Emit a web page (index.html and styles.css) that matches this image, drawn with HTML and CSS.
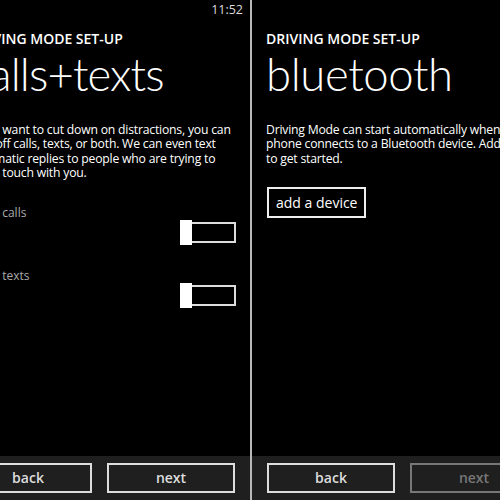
FILE: index.html
```html
<!DOCTYPE html>
<html>
<head>
<meta charset="utf-8">
<link rel="stylesheet" href="styles.css">
</head>
<body>
<div class="screens">
  <div class="panel panel-left">
    <div class="inner inner-left">
      <div class="status"><span class="time">11:52</span></div>
      <div class="content content-left">
        <div class="header">DRIVING MODE SET-UP</div>
        <div class="title title-left">calls+texts</div>
        <p class="body">If you want to cut down on distractions, you can<br>turn off calls, texts, or both. We can even text<br>automatic replies to people who are trying to<br>get in touch with you.</p>
        <div class="setting">
          <div class="label">Ignore calls</div>
          <div class="toggle-row"><span class="thumb"></span><span class="track"></span></div>
        </div>
        <div class="setting">
          <div class="label">Ignore texts</div>
          <div class="toggle-row"><span class="thumb"></span><span class="track"></span></div>
        </div>
      </div>
      <div class="appbar">
        <div class="btn">back</div>
        <div class="btn">next</div>
      </div>
    </div>
  </div>
  <div class="divider"></div>
  <div class="panel panel-right">
    <div class="inner">
      <div class="status"></div>
      <div class="content content-right">
        <div class="header">DRIVING MODE SET-UP</div>
        <div class="title">bluetooth</div>
        <p class="body">Driving Mode can start automatically when your<br>phone connects to a Bluetooth device. Add one<br>to get started.</p>
        <div class="add-btn">add a device</div>
      </div>
      <div class="appbar">
        <div class="btn">back</div>
        <div class="btn btn-disabled">next</div>
      </div>
    </div>
  </div>
</div>
</body>
</html>
```
FILE: styles.css
```css
html, body {
  margin: 0;
  padding: 0;
  background: #000;
}
body {
  width: 500px;
  height: 500px;
  overflow: hidden;
  font-family: "Open Sans", "Noto Sans", sans-serif;
  color: #fff;
}
.screens {
  display: flex;
  width: 500px;
  height: 500px;
}
.panel {
  height: 500px;
  overflow: hidden;
}
.panel-left {
  width: 250px;
  flex: 0 0 250px;
}
.panel-right {
  flex: 1 1 auto;
}
.divider {
  flex: 0 0 2px;
  background: #b8b8b8;
}
.inner {
  width: 301px;
  height: 500px;
  display: flex;
  flex-direction: column;
}
.inner-left {
  margin-left: -51px;
}
.status {
  height: 20px;
  display: flex;
  justify-content: flex-end;
  padding-right: 7px;
}
.time {
  font-size: 12.5px;
  line-height: 20px;
  color: #ddd;
}
.content {
  flex: 1 1 auto;
  padding-right: 14px;
}
.content-left {
  padding-left: 20px;
}
.content-right {
  padding-left: 14px;
}
.header {
  margin-top: 11px;
  font-size: 14px;
  line-height: 16px;
  font-weight: 600;
}
.title {
  margin-top: 2px;
  font-family: "Lato", "Open Sans", sans-serif;
  font-size: 45.5px;
  line-height: 50px;
  font-weight: 300;
  letter-spacing: -0.4px;
  white-space: nowrap;
}
.title-left {
  letter-spacing: -0.9px;
}
.body {
  margin: 24px 0 0;
  font-size: 12.2px;
  line-height: 14.4px;
  letter-spacing: -0.2px;
  white-space: nowrap;
}
.setting {
  margin-top: 25px;
}
.setting + .setting {
  margin-top: 24px;
}
.label {
  margin-left: -6px;
  font-size: 12px;
  line-height: 14px;
  color: #aaa;
}
.toggle-row {
  display: flex;
  justify-content: flex-end;
  align-items: center;
  height: 25px;
}
.thumb {
  width: 12px;
  height: 25px;
  background: #fff;
}
.track {
  width: 42px;
  height: 17px;
  border: 2px solid #ddd;
  border-left: none;
}
.add-btn {
  display: inline-block;
  margin-top: 21px;
  margin-left: 1px;
  height: 27px;
  line-height: 27px;
  padding: 0 7px;
  border: 2px solid #eee;
  font-size: 14px;
}
.appbar {
  height: 44px;
  flex: 0 0 44px;
  box-sizing: border-box;
  background: #1f1f1f;
  display: flex;
  gap: 15px;
  padding: 7px 15px;
}
.btn {
  width: 128px;
  height: 30px;
  box-sizing: border-box;
  border: 2px solid #ddd;
  font-size: 14px;
  font-weight: 600;
  line-height: 26px;
  text-align: center;
  color: #ddd;
}
.btn-disabled {
  border-color: #777;
  color: #777;
}
```
